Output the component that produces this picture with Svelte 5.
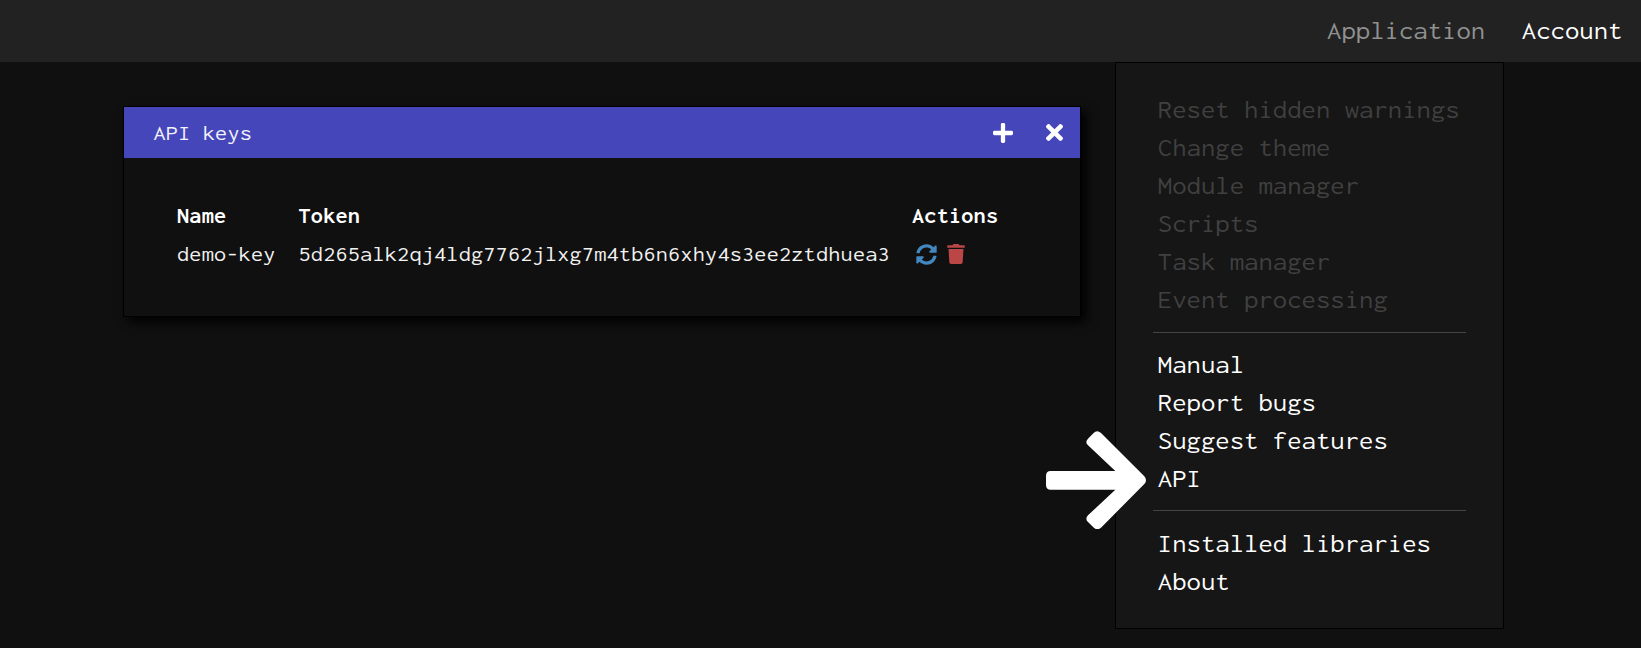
<script>
  const appItems = ['Reset hidden warnings', 'Change theme', 'Module manager', 'Scripts', 'Task manager', 'Event processing'];
  const helpItems = ['Manual', 'Report bugs', 'Suggest features', 'API'];
  const infoItems = ['Installed libraries', 'About'];
  const keys = [{ name: 'demo-key', token: '5d265alk2qj4ldg7762jlxg7m4tb6n6xhy4s3ee2ztdhuea3' }];
</script>

<div class="app">
  <nav class="topbar">
    <div class="entry open">
      <span>Application</span>
      <div class="menu">
        {#each appItems as item}<div class="item faded">{item}</div>{/each}
        <hr />
        {#each helpItems as item}<div class="item">{item}</div>{/each}
        <hr class="tight" />
        {#each infoItems as item}<div class="item">{item}</div>{/each}
      </div>
    </div>
    <div class="entry">Account</div>
  </nav>

  <section class="window">
    <header>
      <h1>API keys</h1>
      <svg class="plus" viewBox="0 32 448 448"><path d="M416 208H272V64c0-17.67-14.33-32-32-32h-32c-17.67 0-32 14.33-32 32v144H32c-17.67 0-32 14.33-32 32v32c0 17.67 14.33 32 32 32h144v144c0 17.67 14.33 32 32 32h32c17.67 0 32-14.33 32-32V304h144c17.67 0 32-14.33 32-32v-32c0-17.67-14.33-32-32-32z" /></svg>
      <svg class="close" viewBox="0 80 352 352"><path d="M242.72 256l100.07-100.07c12.28-12.28 12.28-32.19 0-44.48l-22.24-22.24c-12.28-12.28-32.19-12.28-44.48 0L176 189.28 75.93 89.21c-12.28-12.28-32.19-12.28-44.48 0L9.21 111.45c-12.28 12.28-12.28 32.19 0 44.48L109.28 256 9.21 356.07c-12.28 12.28-12.28 32.19 0 44.48l22.24 22.24c12.28 12.28 32.2 12.28 44.48 0L176 322.72l100.07 100.07c12.28 12.28 32.2 12.28 44.48 0l22.24-22.24c12.28-12.28 12.28-32.19 0-44.48L242.72 256z" /></svg>
    </header>
    <div class="keys">
      <b>Name</b><b>Token</b><b>Actions</b>
      {#each keys as key}
        <span>{key.name}</span>
        <span>{key.token}</span>
        <span class="actions">
          <svg class="renew" viewBox="0 0 512 512"><path d="M370.72 133.28C339.458 104.008 298.888 87.962 255.848 88c-77.458.068-144.328 53.178-162.791 126.85-1.344 5.363-6.122 9.15-11.651 9.15H24.103c-7.498 0-13.194-6.807-11.807-14.176C33.933 94.924 134.813 8 256 8c66.448 0 126.791 26.136 171.315 68.685L463.03 40.97C478.149 25.851 504 36.559 504 57.941V192c0 13.255-10.745 24-24 24H345.941c-21.382 0-32.09-25.851-16.971-40.971l41.75-41.749zM32 296h134.059c21.382 0 32.09 25.851 16.971 40.971l-41.75 41.75c31.262 29.273 71.835 45.319 114.876 45.28 77.418-.07 144.315-53.144 162.787-126.849 1.344-5.363 6.122-9.15 11.651-9.15h57.304c7.498 0 13.194 6.807 11.807 14.176C478.067 417.076 377.187 504 256 504c-66.448 0-126.791-26.136-171.315-68.685L48.97 471.03C33.851 486.149 8 475.441 8 454.059V320c0-13.255 10.745-24 24-24z" /></svg>
          <svg class="trash" viewBox="0 0 448 512"><path d="M432 32H312l-9.4-18.7A24 24 0 0 0 281.1 0H166.8a23.72 23.72 0 0 0-21.4 13.3L136 32H16A16 16 0 0 0 0 48v32a16 16 0 0 0 16 16h416a16 16 0 0 0 16-16V48a16 16 0 0 0-16-16zM53.2 467a48 48 0 0 0 47.9 45h245.8a48 48 0 0 0 47.9-45L416 128H32z" /></svg>
        </span>
      {/each}
    </div>
  </section>

  <svg class="pointer" viewBox="48 62 300 296"><path d="M62 182H256L174 105Q164 95 174 85L190 69Q201 57 213 68L343 198Q353 210 343 221L213 352Q201 362 190 351L174 335Q164 325 174 315L256 238H62Q48 238 48 223V197Q48 182 62 182Z" /></svg>
</div>

<style>
  :global(body) { background: #101010; overflow: hidden; }
  .app {
    position: relative;
    box-sizing: border-box;
    height: 648px;
    background: #101010;
    color: #fff;
    font-family: Inconsolata, 'Liberation Mono', monospace;
    font-stretch: semi-expanded;
    font-size: 26.15px;
  }
  .topbar {
    display: flex;
    justify-content: flex-end;
    gap: 36.6px;
    height: 62px;
    box-sizing: border-box;
    padding-right: 18.5px;
    background: #222;
    line-height: 61px;
  }
  .entry { position: relative; }
  .open > span { color: #919191; }
  .menu {
    position: absolute;
    top: 62px;
    right: -18.5px;
    width: 389px;
    height: 567px;
    box-sizing: border-box;
    padding: 28px 37px;
    border: 1px solid #000;
    background: #161616;
    line-height: 38px;
  }
  .item { height: 38px; padding-left: 5px; white-space: nowrap; }
  .faded { color: #404040; }
  hr { height: 1px; margin: 13px 0; border: 0; background: #444; }
  .tight { margin: 12px 0 14px; }
  .window {
    width: 958px;
    height: 211px;
    box-sizing: border-box;
    margin: 44px 0 0 123px;
    border: 1px solid #000;
    background: #101010;
    box-shadow: 5px 5px 10px #000;
    font-size: 22px;
    letter-spacing: 0.22px;
  }
  header {
    display: flex;
    align-items: center;
    height: 51px;
    padding: 0 17.5px 0 29.5px;
    background: #4646bb;
  }
  h1 { flex: 1; margin: 0; font-size: inherit; font-weight: 400; line-height: 51px; color: #f2f2fa; }
  svg { display: block; fill: #fff; }
  .plus { width: 20px; height: 20px; margin-top: 1px; }
  .close { width: 17px; height: 17px; margin-left: 32.5px; }
  .keys {
    display: grid;
    grid-template-columns: 121.5px 613.5px auto;
    padding: 39px 0 0 53px;
    line-height: 38px;
    white-space: nowrap;
  }
  .keys span { color: #f2f2f2; }
  .actions { display: flex; align-items: center; gap: 10px; padding-left: 4px; }
  .renew { width: 21px; height: 21px; fill: #4387c0; }
  .trash { width: 18px; height: 20px; fill: #bb4646; }
  .pointer { position: absolute; left: 1046px; top: 430.5px; width: 100px; height: 98.7px; }
</style>
